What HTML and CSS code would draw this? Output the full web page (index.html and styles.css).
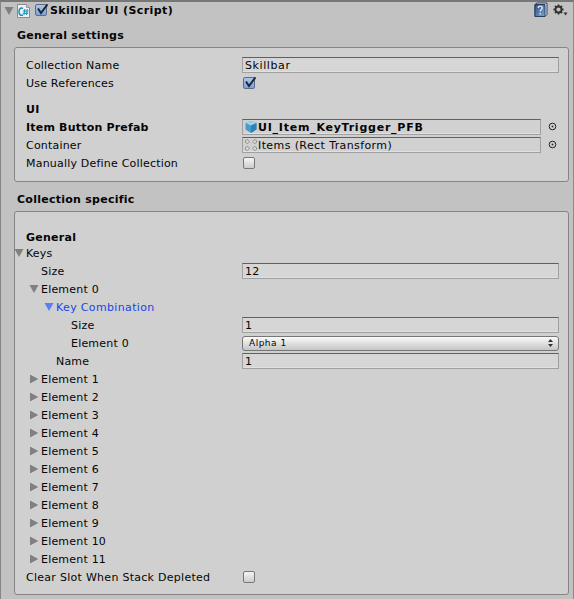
FILE: index.html
```
<!DOCTYPE html>
<html lang="en">
<head>
<meta charset="utf-8">
<title>Skillbar UI</title>
<link rel="stylesheet" href="styles.css">
</head>
<body>
<svg class="defs" width="0" height="0">
  <defs>
    <linearGradient id="book" x1="0" y1="0" x2="1" y2="1"><stop offset="0" stop-color="#31507f"/><stop offset="1" stop-color="#7fa3d2"/></linearGradient>
    <symbol id="down" viewBox="0 0 10 10"><path d="M.5 1h9L5 9z"/></symbol>
    <symbol id="right" viewBox="0 0 10 10"><path d="M1 .5v9L9.300 5z"/></symbol>
    <symbol id="check" viewBox="0 0 14 14"><path d="M3 5.500 6 10 12.500 1.300" fill="none" stroke="#1d2738" stroke-width="2"/></symbol>
    <symbol id="picker" viewBox="0 0 9 9"><circle cx="4.500" cy="4.500" r="3.300" fill="none" stroke="#222" stroke-width="1"/><rect x="3.700" y="3.700" width="1.600" height="1.600" fill="#222"/></symbol>
  </defs>
</svg>
<main class="inspector">
  <header class="header">
    <svg class="fold" width="10" height="10"><use href="#down"/></svg>
    <svg class="script" width="14" height="16" viewBox="0 0 14 16"><path d="M.5 1.500h9l3 3v10H.5z" fill="#eef2f4" stroke="#8b8b8b"/><path d="M9.500 1.500v3h3" fill="#ccc" stroke="#999"/><path d="M6 5.500C3.500 4.300 2 6 2 8.700c0 3 1.700 4.300 4 3.300" fill="none" stroke="#168fb8" stroke-width="1.500"/><path d="M7.800 6 7 12M10.300 6l-.8 6M6 8h5.500M5.800 10.300h5.500" fill="none" stroke="#168fb8"/></svg>
    <span class="box on"><svg width="14" height="14"><use href="#check"/></svg></span>
    <h1>Skillbar UI (Script)</h1>
    <svg class="help" width="14" height="16" viewBox="0 0 14 16"><path d="M1 2.500 3 1h10v11.500l-2 2H1z" fill="#e8edf4" stroke="#263d60"/><path d="M1 2.500h10v12H1z" fill="url(#book)" stroke="#263d60"/><path d="M4.200 6c0-2.500 4-2.500 4 0 0 1.500-2 1.500-2 3.500M6.200 11v1.500" fill="none" stroke="#e7eefb" stroke-width="1.300"/></svg>
    <svg class="gear" width="15" height="14" viewBox="0 0 15 14"><g fill="none" stroke="#303030"><circle cx="5.500" cy="5.500" r="3" stroke-width="1.800"/><path d="M5.500 2.500v-2M5.500 8.500v2M2.500 5.500h-2M8.500 5.500h2M3.400 3.400 2 2M7.600 7.600 9 9M7.600 3.400 9 2M3.400 7.600 2 9" stroke-width="1.800"/></g><path d="M10.500 8.500h4l-2 3z" fill="#303030"/></svg>
  </header>
  <h2 class="title">General settings</h2>
  <section class="panel first">
    <div class="row"><span class="label">Collection Name</span><span class="field name">Skillbar</span></div>
    <div class="row"><span class="label">Use References</span><span class="box on"><svg width="14" height="14"><use href="#check"/></svg></span></div>
    <h3 class="row sub">UI</h3>
    <div class="row strong"><span class="label">Item Button Prefab</span><span class="field object"><svg width="14" height="14" viewBox="0 0 13 14"><path d="m6.500 1 5.500 2v6.500L6.500 13 1 9.500V3z" fill="#499bce"/><path d="m6.500 1 5.500 2-5.500 2.500L1 3z" fill="#9bd3ee"/><path d="M6.500 5.500 12 3v6.500L6.500 13z" fill="#3480b2"/></svg>UI_Item_KeyTrigger_PFB</span><svg class="pick" width="9" height="9"><use href="#picker"/></svg></div>
    <div class="row"><span class="label">Container</span><span class="field object"><svg width="14" height="14" viewBox="0 0 14 14"><g fill="#ddd" stroke="#929292"><path d="M1.500 2.500 3.500 1.500 5.500 4 4 5.500 1.500 4.500zM12.500 2.500 10.500 1.500 8.500 4 10 5.500l2.500-1zM1.500 11.500l2 1L5.500 10 4 8.500l-2.500 1zM12.500 11.500l-2 1L8.500 10 10 8.500l2.500 1z"/></g></svg>Items (Rect Transform)</span><svg class="pick" width="9" height="9"><use href="#picker"/></svg></div>
    <div class="row"><span class="label">Manually Define Collection</span><span class="box"></span></div>
  </section>
  <h2 class="title second">Collection specific</h2>
  <section class="panel last">
    <h3 class="row general">General</h3>
    <div class="row"><span class="label d0"><svg class="fold" width="10" height="10"><use href="#down"/></svg>Keys</span></div>
    <div class="row"><span class="label i1">Size</span><span class="field">12</span></div>
    <div class="row"><span class="label d1"><svg class="fold" width="10" height="10"><use href="#down"/></svg>Element 0</span></div>
    <div class="row"><span class="label d2 active"><svg class="fold" width="10" height="10"><use href="#down"/></svg>Key Combination</span></div>
    <div class="row"><span class="label i3">Size</span><span class="field">1</span></div>
    <div class="row"><span class="label i3">Element 0</span><span class="popup">Alpha 1<svg width="5" height="8" viewBox="0 0 5 8"><path d="M0 3h5L2.500 0zM0 5h5L2.500 8z" fill="#333"/></svg></span></div>
    <div class="row"><span class="label i2">Name</span><span class="field">1</span></div>
    <div class="row"><span class="label d1"><svg class="fold" width="10" height="10"><use href="#right"/></svg>Element 1</span></div>
    <div class="row"><span class="label d1"><svg class="fold" width="10" height="10"><use href="#right"/></svg>Element 2</span></div>
    <div class="row"><span class="label d1"><svg class="fold" width="10" height="10"><use href="#right"/></svg>Element 3</span></div>
    <div class="row"><span class="label d1"><svg class="fold" width="10" height="10"><use href="#right"/></svg>Element 4</span></div>
    <div class="row"><span class="label d1"><svg class="fold" width="10" height="10"><use href="#right"/></svg>Element 5</span></div>
    <div class="row"><span class="label d1"><svg class="fold" width="10" height="10"><use href="#right"/></svg>Element 6</span></div>
    <div class="row"><span class="label d1"><svg class="fold" width="10" height="10"><use href="#right"/></svg>Element 7</span></div>
    <div class="row"><span class="label d1"><svg class="fold" width="10" height="10"><use href="#right"/></svg>Element 8</span></div>
    <div class="row"><span class="label d1"><svg class="fold" width="10" height="10"><use href="#right"/></svg>Element 9</span></div>
    <div class="row"><span class="label d1"><svg class="fold" width="10" height="10"><use href="#right"/></svg>Element 10</span></div>
    <div class="row"><span class="label d1"><svg class="fold" width="10" height="10"><use href="#right"/></svg>Element 11</span></div>
    <div class="row"><span class="label wide">Clear Slot When Stack Depleted</span><span class="box"></span></div>
  </section>
</main>
</body>
</html>
```
FILE: styles.css
```
* { box-sizing: border-box; }
body { margin: 0; background: #c2c2c2; color: #050505; font: 11px/18px "DejaVu Sans", sans-serif; overflow: hidden; }
.defs { display: block; height: 0; }
svg { flex: none; display: block; }
.inspector { height: 599px; border-top: 2px solid #777; border-left: 1px solid #858585; border-right: 1px solid #8b8b8b; }
h1, h2, h3 { margin: 0; font-size: 11px; font-weight: bold; white-space: nowrap; letter-spacing: .26px; }
.header { display: flex; align-items: center; height: 18px; padding: 0 5px 0 3px; }
.fold { fill: #808080; margin-right: 3px; }
.header .fold { margin-top: -1px; }
.script { margin: -1px 4px 0 0; }
.header .box { margin: -2px 3px 0 0; }
.header h1 { flex: 1; letter-spacing: .42px; }
.help { margin: -2px 5px 0 0; }
.gear { margin-top: -1px; }
.title { height: 18px; margin: 6px 0 0 16px; padding-top: 1px; }
.panel { margin: 3px 4px 0 13px; border: 1px solid #858585; border-radius: 3px; background: #d0d0d0; padding: 8px 9px 0 11px; }
.first { height: 135px; }
.second { margin-top: 8px; }
.last { height: 384px; padding-top: 16px; }
.row { display: flex; align-items: center; height: 18px; white-space: nowrap; }
.sub { margin-top: 8px; padding-top: 1px; }
.general { height: 16px; padding-top: 3px; }
.label { display: flex; align-items: center; width: 216px; height: 18px; padding-top: 2px; flex: none; letter-spacing: .2px; }
.label .fold { margin-top: -2px; }
.wide { letter-spacing: .28px; }
.strong { font-weight: bold; }
.i1 { padding-left: 15px; }
.i2 { padding-left: 30px; }
.i3 { padding-left: 45px; }
.d0 { margin-left: -12px; width: 228px; }
.d0 .fold { margin-right: 2px; }
.d1 { padding-left: 3px; }
.d2 { padding-left: 18px; }
.d1 .fold, .d2 .fold { margin-right: 2px; }
.active { color: #1746e6; letter-spacing: .35px; }
.active .fold { fill: #5e7cf3; }
.field { flex: 1; display: flex; align-items: center; height: 16px; padding: 1px 0 0 2px; line-height: 14px; background: #d6d6d6; border: 1px solid #a0a0a0; border-top-color: #606060; box-shadow: inset 0 -1px #e0e0e0; letter-spacing: .3px; }
.name { letter-spacing: .6px; }
.object { background: #d1d1d1; padding-left: 1px; letter-spacing: .4px; }
.strong .object { letter-spacing: .76px; }
.object svg { margin: -1px 0 0 0; }
.pick { margin: -2px 2px 0 7px; }
.box { display: block; flex: none; width: 12px; height: 12px; margin-left: 1px; border: 1px solid #777; border-radius: 2px; background: linear-gradient(#f4f4f4, #ccc); }
.on { border-color: #5c6c87; background: linear-gradient(#aec5e9, #80a2d8); }
.on svg { margin: -2px 0 0 -1px; }
.popup { flex: 1; display: flex; align-items: center; justify-content: space-between; height: 15px; padding: 0 5px 0 6px; font-size: 9px; letter-spacing: .5px; background: linear-gradient(#fafafa, #c5c5c5); border: 1px solid #777; border-radius: 3px; }
```
